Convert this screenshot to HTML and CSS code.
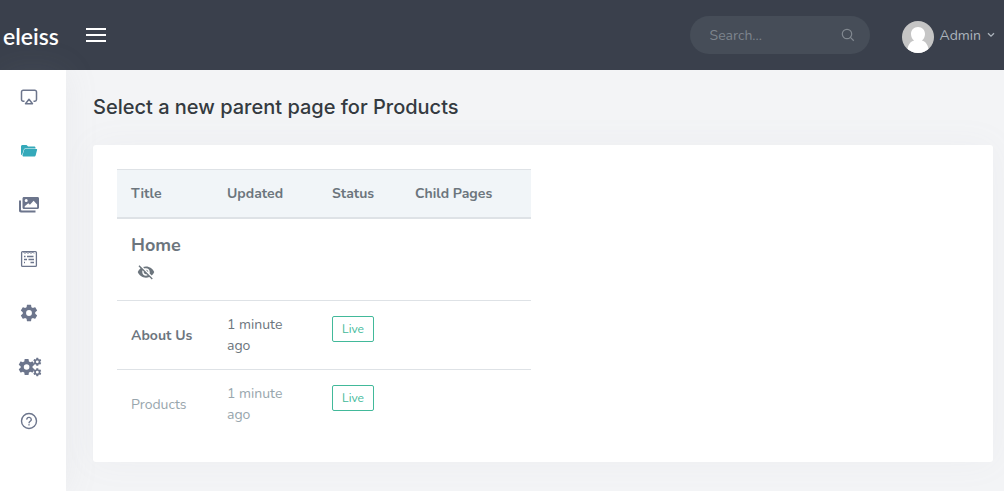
FILE: index.html
```html
<!DOCTYPE html>
<html lang="en">
<head>
<meta charset="utf-8">
<meta name="viewport" content="width=device-width, initial-scale=1">
<title>Select a new parent page</title>
<link rel="stylesheet" href="styles.css">
</head>
<body>
<header class="topbar">
  <a class="logo" href="#">eleiss</a>
  <button class="menu-toggle" type="button" aria-label="Toggle menu"><span></span><span></span><span></span></button>
  <form class="search" role="search">
    <input class="search-input" type="text" placeholder="Search..." aria-label="Search">
    <button class="search-button" type="submit" aria-label="Search">
      <svg width="14" height="14" viewBox="0 0 14 14" fill="none" stroke="currentColor" stroke-width="1.2"><circle cx="6" cy="6" r="4.7"/><path d="M9.4 9.4l3.4 3.3"/></svg>
    </button>
  </form>
  <button class="account" type="button">
    <svg class="avatar" width="32" height="32" viewBox="0 0 32 32"><clipPath id="round"><circle cx="16" cy="16" r="16"/></clipPath><g clip-path="url(#round)"><path fill="#c5c5c5" d="M0 0h32v32H0z"/><path fill="#fff" d="M16 6c-4.2 0-7 3-7 7 0 3 1.400 5.300 3.200 6.500C8 20.500 5.500 24 5 32h22c-.5-8-3-11.500-7.200-12.500C21.600 18.300 23 16 23 13c0-4-2.800-7-7-7z"/></g></svg>
    <span>Admin</span>
    <svg class="chevron" width="8" height="6" viewBox="0 0 8 6" fill="none" stroke="currentColor" stroke-width="1.300"><path d="M1 1.200l3 3 3-3"/></svg>
  </button>
</header>
<div class="layout">
  <nav class="sidebar" aria-label="Main">
    <a href="#" aria-label="Dashboard"><svg width="18" height="18" viewBox="0 0 18 18" fill="none" stroke="currentColor" stroke-width="1.500" stroke-linejoin="round"><path d="M4.500 13.200H3.200A1.700 1.700 0 0 1 1.500 11.500V4a1.700 1.700 0 0 1 1.700-1.700h11.600A1.700 1.700 0 0 1 16.500 4v7.500a1.700 1.700 0 0 1-1.700 1.700h-1.300M9 11.300l3.500 4.400h-7z"/></svg></a>
    <a class="active" href="#" aria-label="Pages"><svg width="18" height="18" viewBox="0 0 18 18" fill="currentColor"><path d="M1 4.500C1 3.600 1.600 3 2.500 3h4l1.600 1.600h6c.8 0 1.400.5 1.400 1.300v.5H5.200c-.7 0-1.200.4-1.400 1L2 13.200C1.400 13 1 12.500 1 12z"/><path d="M5.400 7.100h11.200c.4 0 .6.300.5.700l-1.400 5.500c-.2.800-.7 1.200-1.500 1.200H3.200c-.5 0-.8-.4-.7-.9l1.500-5.500c.2-.7.700-1 1.400-1z"/></svg></a>
    <a href="#" aria-label="Images"><svg width="22" height="18" viewBox="0 0 22 18" fill="currentColor"><path fill-rule="evenodd" d="M6 1h13.500c1 0 1.500.6 1.500 1.500v9c0 .9-.6 1.500-1.500 1.500H6c-1 0-1.500-.6-1.500-1.500v-9C4.500 1.600 5 1 6 1zm2.200 2a1.500 1.500 0 1 0 0 3 1.500 1.500 0 0 0 0-3zM6.700 11.400h12.400V8.500l-3.500-3.700-3.700 4-1.600-1.500-3.600 3z"/><path d="M1 4.500h2v9c0 .7.400 1.100 1.200 1.100h13.300v1.900H3C1.700 16.500 1 15.800 1 14.500z"/></svg></a>
    <a href="#" aria-label="Forms"><svg width="18" height="18" viewBox="0 0 18 18" fill="none" stroke="currentColor" stroke-width="1.300"><rect x="1.600" y="1.600" width="14.800" height="14.800" rx="1"/><path stroke-width="1" d="M3.500 2l1.500 1.500L6.500 2 8 3.500 9.500 2 11 3.500 12.500 2 14 3.500"/><path d="M4 6.500h1.500M7 6.500h6.500M4 9.500h3M8.500 9.500H14M4 12.500h1M10.500 12.500H14"/></svg></a>
    <a href="#" aria-label="Settings"><svg width="20" height="20" viewBox="0 0 24 24" fill="currentColor"><path id="gear" fill-rule="evenodd" d="M12 15.500A3.500 3.500 0 0 1 8.500 12 3.500 3.500 0 0 1 12 8.500a3.500 3.500 0 0 1 3.500 3.500 3.500 3.500 0 0 1-3.500 3.500m7.430-2.530c.04-.32.070-.64.070-.97s-.03-.66-.07-1l2.110-1.630c.19-.15.240-.42.120-.64l-2-3.460c-.12-.22-.39-.31-.61-.22l-2.490 1c-.52-.39-1.060-.73-1.690-.98l-.37-2.650A.506.506 0 0 0 14 2h-4c-.25 0-.46.180-.5.420l-.37 2.650c-.63.250-1.170.590-1.690.980l-2.490-1c-.22-.09-.49 0-.61.220l-2 3.460c-.13.220-.07.490.120.640L4.570 11c-.04.340-.07.670-.07 1s.03.650.07.970l-2.110 1.660c-.19.150-.25.420-.12.640l2 3.460c.12.220.39.300.61.220l2.490-1.010c.52.400 1.060.740 1.690.990l.37 2.650c.04.240.25.420.5.420h4c.25 0 .46-.18.500-.42l.37-2.650c.63-.26 1.170-.59 1.690-.99l2.490 1.010c.22.080.49 0 .61-.22l2-3.460c.12-.22.070-.49-.12-.64z"/></svg></a>
    <a href="#" aria-label="Advanced settings"><svg width="26" height="20" viewBox="0 0 26 20" fill="currentColor"><use href="#gear" transform="translate(1 .4) scale(.8)"/><use href="#gear" transform="translate(16.500 0) scale(.4)"/><use href="#gear" transform="translate(16.500 10.400) scale(.4)"/></svg></a>
    <a href="#" aria-label="Help"><svg width="18" height="18" viewBox="0 0 18 18" fill="none" stroke="currentColor" stroke-width="1.400"><circle cx="9" cy="9" r="7.500"/><path stroke-linecap="round" d="M6.800 7a2.300 2.300 0 0 1 4.500.7c0 1.400-2.200 1.700-2.200 3M9 12.700v.2"/></svg></a>
  </nav>
  <main class="content">
    <h1 class="page-title">Select a new parent page for Products</h1>
    <section class="card">
      <table class="pages">
        <colgroup><col class="col-title"><col class="col-updated"><col class="col-status"><col class="col-children"></colgroup>
        <thead><tr><th>Title</th><th>Updated</th><th>Status</th><th>Child Pages</th></tr></thead>
        <tbody>
          <tr><td colspan="4"><a class="home" href="#">Home</a><svg class="hidden-icon" role="img" aria-label="Not in menus" width="18" height="18" viewBox="0 0 24 24" fill="currentColor"><path d="M12 7c2.760 0 5 2.240 5 5 0 .65-.13 1.260-.36 1.830l2.920 2.920c1.510-1.260 2.700-2.890 3.430-4.750-1.730-4.390-6-7.500-11-7.500-1.400 0-2.740.25-3.980.7l2.160 2.160C10.740 7.130 11.350 7 12 7zM2 4.270l2.280 2.280.46.460C3.080 8.300 1.780 10.020 1 12c1.730 4.390 6 7.500 11 7.500 1.550 0 3.030-.3 4.380-.84l.42.420L19.730 22 21 20.730 3.270 3 2 4.270zM7.530 9.800l1.550 1.550c-.05.210-.08.430-.08.650 0 1.660 1.340 3 3 3 .22 0 .44-.03.650-.08l1.550 1.550c-.67.330-1.410.530-2.200.530-2.760 0-5-2.240-5-5 0-.79.200-1.530.53-2.200zm4.310-.78l3.150 3.150.02-.16c0-1.660-1.340-3-3-3l-.17.010z"/></svg></td></tr>
          <tr><td><a class="page-link" href="#">About Us</a></td><td>1 minute ago</td><td><a class="status" href="#">Live</a></td><td></td></tr>
          <tr class="disabled"><td>Products</td><td>1 minute ago</td><td><a class="status" href="#">Live</a></td><td></td></tr>
        </tbody>
      </table>
    </section>
  </main>
</div>
</body>
</html>
```
FILE: styles.css
```css
* { box-sizing: border-box; }
body {
  margin: 0;
  min-height: 100vh;
  display: flex;
  flex-direction: column;
  background: #f3f4f6;
  color: #6c757d;
  font: 14px/21px Nunito, Lato, "Open Sans", sans-serif;
}
a { color: inherit; text-decoration: none; }
button { font: inherit; color: inherit; border: 0; padding: 0; background: none; cursor: pointer; }
svg { display: block; }

.topbar {
  display: flex;
  align-items: center;
  height: 70px;
  padding: 2px 9px 0 3px;
  padding: 0 9px 0 3px;
  background: #3a404c;
  color: #adb5bd;
}
.logo { width: 83px; padding-top: 2px; color: #fff; font: 600 23px/32px Lato, sans-serif; }
.menu-toggle { display: grid; gap: 4px; width: 20px; }
.menu-toggle span { height: 2px; background: #fff; }
.search {
  display: flex;
  align-items: center;
  width: 180px;
  height: 38px;
  margin-left: auto;
  padding: 0 15px 0 20px;
  border-radius: 19px;
  background: #464d58;
  color: #818890;
}
.search-input { flex: 1; min-width: 0; padding: 0; border: 0; outline: 0; background: none; color: #adb5bd; font: inherit; }
.search-input::placeholder { color: #7d848d; opacity: 1; }
.account { display: flex; align-items: center; gap: 6px; margin-left: 32px; }
.avatar { margin-top: 4px; }

.layout { flex: 1; display: flex; }
.sidebar {
  display: flex;
  flex-direction: column;
  flex: 0 0 66px;
  padding-right: 8px;
  background: #fff;
  box-shadow: 0 0 35px rgba(154, 161, 171, 0.1);
}
.sidebar a { display: flex; align-items: center; justify-content: center; height: 54px; color: #6c758c; }
.sidebar a.active { color: #34a9ba; }
.content { flex: 1; min-width: 0; padding: 0 11px 29px 27px; }
.page-title { margin: 0; color: #343a40; font: 500 20px/75px Inter, Roboto, sans-serif; }
.card { padding: 24px; background: #fff; border-radius: 3px; box-shadow: 0 0 35px rgba(154, 161, 171, 0.06); }

.pages { table-layout: fixed; width: 414px; max-width: 100%; border-collapse: separate; border-spacing: 0; }
.col-title { width: 96px; }
.col-updated { width: 105px; }
.col-status { width: 83px; }
.pages th, .pages td { padding: 13px 14px; border-top: 1px solid #dee2e6; text-align: left; vertical-align: middle; }
.pages th { background: #f1f5f8; border-bottom: 2px solid #dee2e6; font-weight: 700; }
.pages tbody tr:first-child td { padding-bottom: 19px; border-top: 0; }
.home { display: block; font-size: 18px; line-height: 27px; font-weight: 700; }
.hidden-icon { margin: 4px 0 0 6px; }
.page-link { font-weight: 700; }
.status { display: block; width: 42px; margin-bottom: 12px; border: 1px solid #42b99a; border-radius: 2px; color: #42b99a; font-size: 12px; line-height: 24px; text-align: center; }
.disabled { color: #98a6ad; }
```
